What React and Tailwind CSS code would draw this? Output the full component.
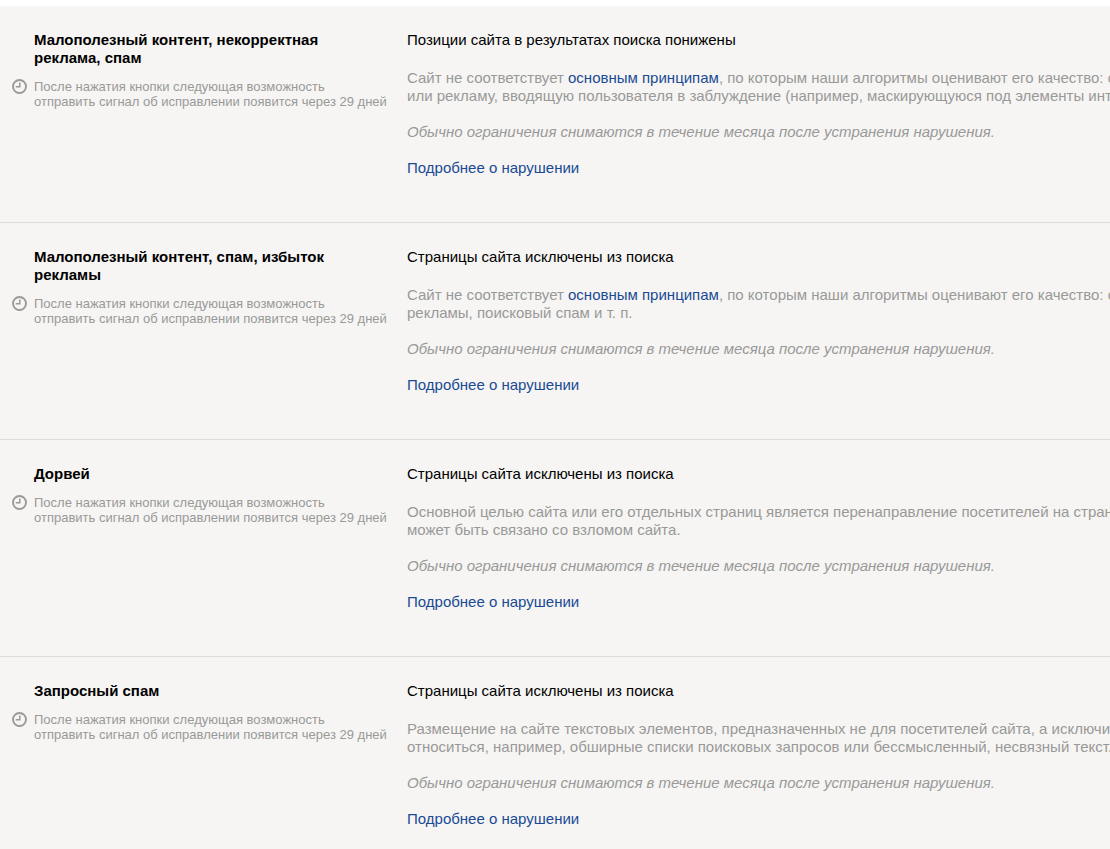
const NOTICE = 'Обычно ограничения снимаются в течение месяца после устранения нарушения.';

const principles = (
  <a href="#principles" className="text-[#1a4a94] hover:text-red-600">
    основным принципам
  </a>
);

const violations = [
  {
    id: 'ads',
    title: 'Малополезный контент, некорректная реклама, спам',
    effect: 'Позиции сайта в результатах поиска понижены',
    lines: [
      <>Сайт не соответствует {principles}, по которым наши алгоритмы оценивают его качество: с</>,
      'или рекламу, вводящую пользователя в заблуждение (например, маскирующуюся под элементы инт',
    ],
  },
  {
    id: 'excess-ads',
    title: 'Малополезный контент, спам, избыток рекламы',
    effect: 'Страницы сайта исключены из поиска',
    lines: [
      <>Сайт не соответствует {principles}, по которым наши алгоритмы оценивают его качество: с</>,
      'рекламы, поисковый спам и т. п.',
    ],
  },
  {
    id: 'doorway',
    title: 'Дорвей',
    effect: 'Страницы сайта исключены из поиска',
    lines: [
      'Основной целью сайта или его отдельных страниц является перенаправление посетителей на стран',
      'может быть связано со взломом сайта.',
    ],
  },
  {
    id: 'query-spam',
    title: 'Запросный спам',
    effect: 'Страницы сайта исключены из поиска',
    lines: [
      'Размещение на сайте текстовых элементов, предназначенных не для посетителей сайта, а исключи',
      'относиться, например, обширные списки поисковых запросов или бессмысленный, несвязный текст.',
    ],
  },
];

function ClockIcon() {
  return (
    <svg viewBox="0 0 15 15" className="size-[15px] shrink-0" fill="none" stroke="currentColor" aria-hidden="true">
      <circle cx="7.5" cy="7.5" r="6.5" strokeWidth="1.9" />
      <path d="M7.8 3.6V7.8H3.8" strokeWidth="1.5" />
    </svg>
  );
}

function Violation({ id, title, effect, lines }) {
  return (
    <article className="flex border-b border-[#dddddd] pt-[25px] pb-[45px] last:border-b-0 last:pb-5">
      <div className="w-[407px] shrink-0 pl-3">
        <h2 className="max-w-[330px] pl-[22px] font-bold text-black">{title}</h2>
        <div className="mt-3 flex gap-[7px] text-[13px] leading-[15px] text-[#999999]">
          <ClockIcon />
          <p className="whitespace-nowrap">
            После нажатия кнопки следующая возможность
            <br />
            отправить сигнал об исправлении появится через 29 дней
          </p>
        </div>
      </div>
      <div className="min-w-0 flex-1 overflow-hidden whitespace-nowrap text-[#999999]">
        <h3 className="text-black">{effect}</h3>
        <p className="mt-5">
          {lines[0]}
          <br />
          {lines[1]}
        </p>
        <p className="mt-[18px] italic">{NOTICE}</p>
        <p className="mt-[18px]">
          <a href={`#${id}`} className="text-[#1a4a94] hover:text-red-600">
            Подробнее о нарушении
          </a>
        </p>
      </div>
    </article>
  );
}

export default function App() {
  return (
    <div className="flex min-h-screen flex-col bg-white pt-1.5 font-['Liberation_Sans',Arial,sans-serif] text-[15px] leading-[18px]">
      <main className="flex-1 bg-[#f6f5f3]">
        {violations.map((violation) => (
          <Violation key={violation.id} {...violation} />
        ))}
      </main>
    </div>
  );
}
